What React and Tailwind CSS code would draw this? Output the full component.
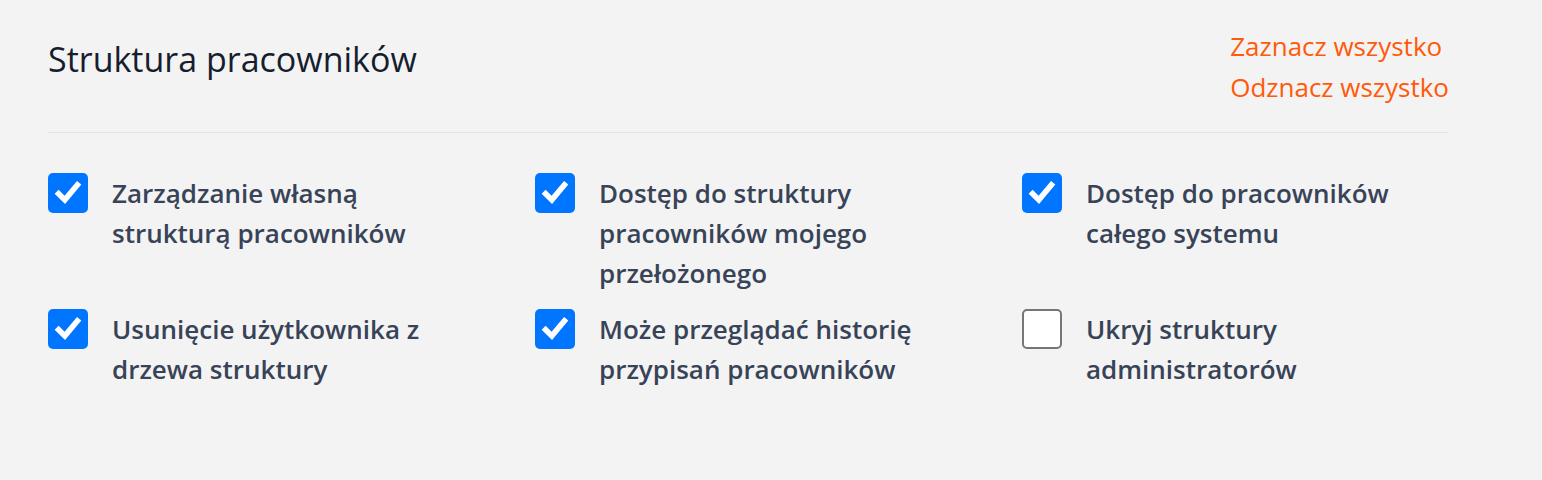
import React, { useState } from "react";

const perms = [
    { id: "own", label: "Zarządzanie własną strukturą pracowników", on: true },
    { id: "boss", label: "Dostęp do struktury pracowników mojego przełożonego", on: true },
    { id: "all", label: "Dostęp do pracowników całego systemu", on: true },
    { id: "remove", label: "Usunięcie użytkownika z drzewa struktury", on: true },
    { id: "history", label: "Może przeglądać historię przypisań pracowników", on: true },
    { id: "admins", label: "Ukryj struktury administratorów", on: false },
];

function Box({ checked, onClick }) {
    return checked ? (
        <button onClick={onClick} className="w-10 h-10 flex-shrink-0 rounded-[5px] bg-[#0075ff] flex items-center justify-center">
            <svg viewBox="0 0 24 24" className="w-[30px] h-[30px]" fill="none" stroke="white" strokeWidth="4.5" strokeLinecap="square">
                <path d="M4.5 12.5l5 5L19.5 5.5" />
            </svg>
        </button>
    ) : (
        <button onClick={onClick} className="w-10 h-10 flex-shrink-0 rounded-[5px] bg-white border-2 border-[#767676]" />
    );
}

export default function App() {
    const [state, setState] = useState(() => Object.fromEntries(perms.map(p => [p.id, p.on])));
    const setAll = (v) => setState(Object.fromEntries(perms.map(p => [p.id, v])));

    return (
        <div className="min-h-[480px] bg-[#f3f3f3] pl-12 pt-[26px]" style={{ fontFamily: '"Open Sans", "Noto Sans", sans-serif' }}>
            <div className="w-[1401px]">
                {/* Header */}
                <div className="flex items-start justify-between pb-[24px] border-b border-[#e3e4e8]">
                    <h2 className="text-[34px] leading-[44px] mt-[11px] text-[#161d2e] font-medium">Struktura pracowników</h2>
                    <div className="flex flex-col items-start text-[26px] leading-[41px] text-[#ff5a0a]">
                        <button onClick={() => setAll(true)}>Zaznacz wszystko</button>
                        <button onClick={() => setAll(false)}>Odznacz wszystko</button>
                    </div>
                </div>

                {/* Permissions */}
                <div className="grid grid-cols-[repeat(3,487px)] gap-y-4 pt-[40px] w-[1461px]">
                    {perms.map(p => (
                        <label key={p.id} className="flex items-start gap-6 cursor-pointer">
                            <Box checked={state[p.id]} onClick={() => setState(s => ({ ...s, [p.id]: !s[p.id] }))} />
                            <span className="max-w-[340px] text-[26px] leading-[40px] font-semibold text-[#384357]">{p.label}</span>
                        </label>
                    ))}
                </div>
            </div>
        </div>
    );
}
